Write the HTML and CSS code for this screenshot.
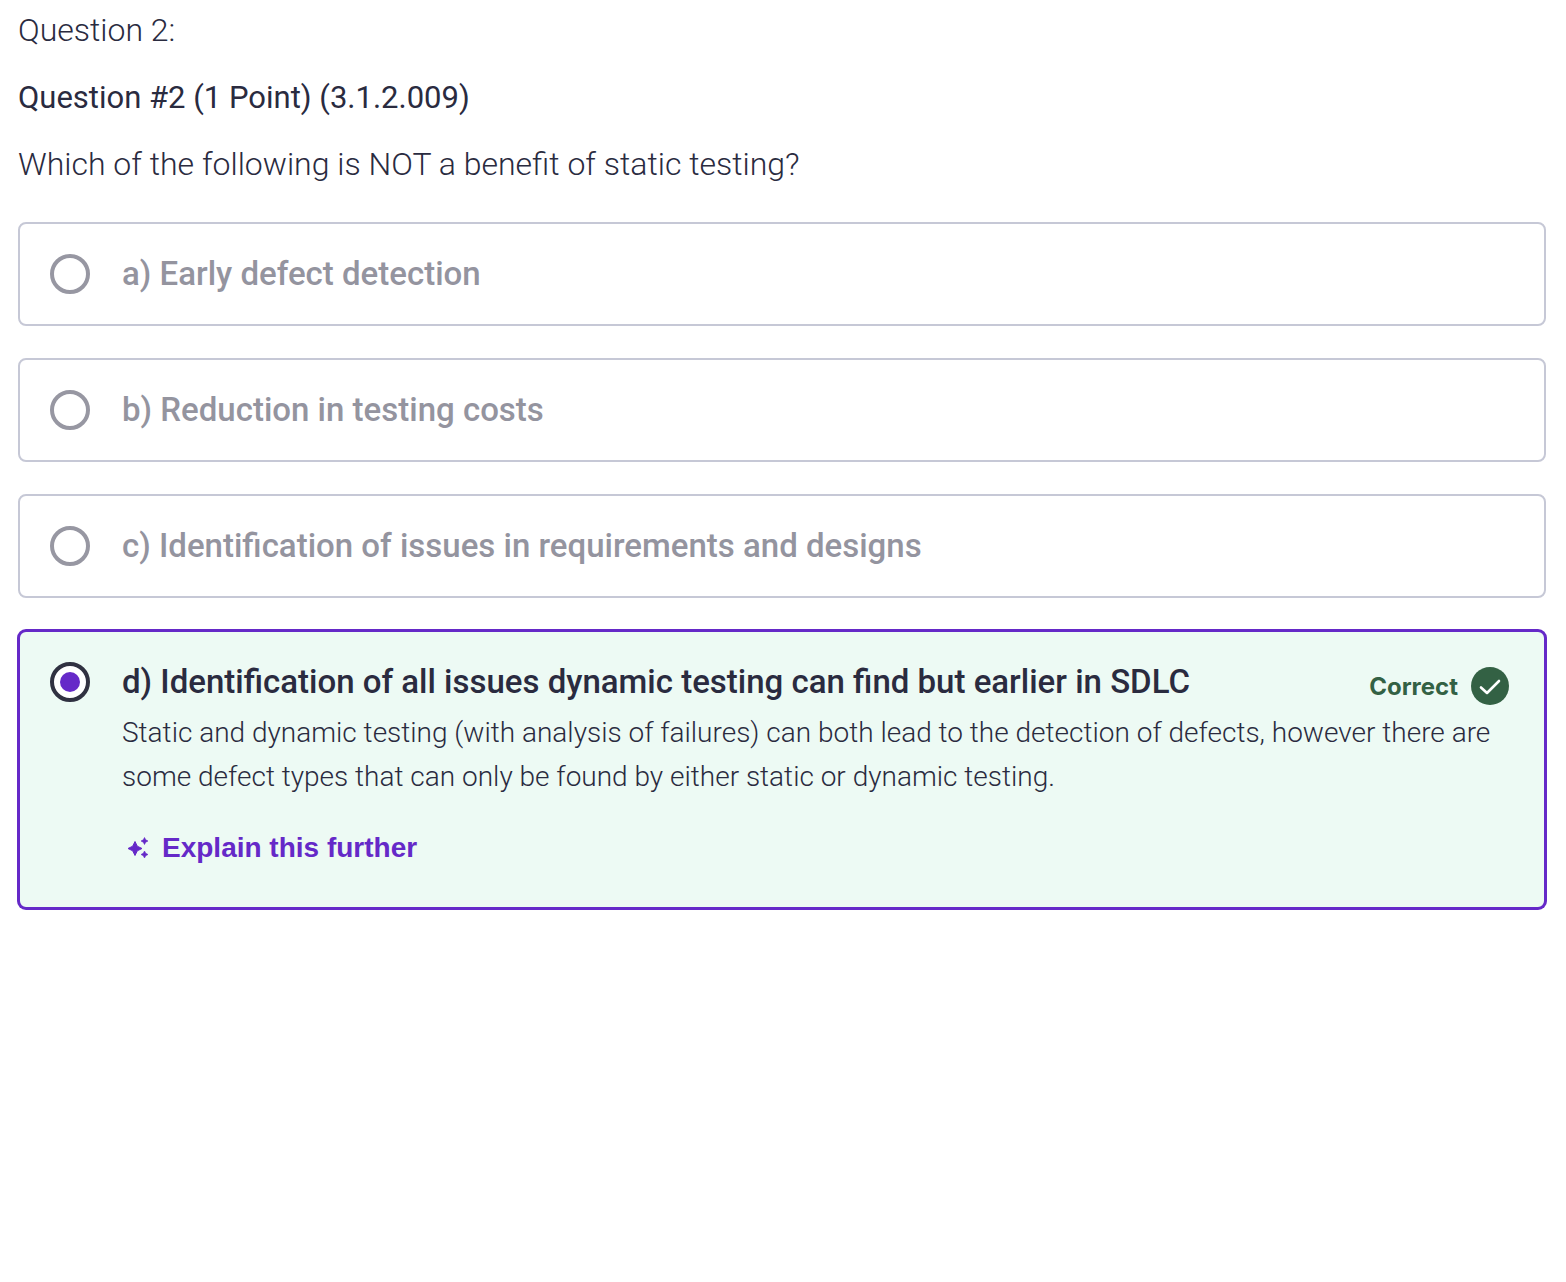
FILE: index.html
```html
<!DOCTYPE html>
<html lang="en">
<head>
<meta charset="utf-8">
<meta name="viewport" content="width=device-width, initial-scale=1">
<title>Question 2</title>
<link rel="stylesheet" href="styles.css">
</head>
<body>
<main class="question">
  <header class="prompt">
    <p class="prompt-label">Question 2:</p>
    <h1 class="prompt-title">Question #2 (1 Point) (3.1.2.009)</h1>
    <p class="prompt-text">Which of the following is NOT a benefit of static testing?</p>
  </header>
  <form class="answers">
    <div class="answer">
      <input class="answer-radio" type="radio" name="answer" id="answer-a" disabled>
      <label class="answer-label" for="answer-a">a) Early defect detection</label>
    </div>
    <div class="answer">
      <input class="answer-radio" type="radio" name="answer" id="answer-b" disabled>
      <label class="answer-label" for="answer-b">b) Reduction in testing costs</label>
    </div>
    <div class="answer">
      <input class="answer-radio" type="radio" name="answer" id="answer-c" disabled>
      <label class="answer-label" for="answer-c">c) Identification of issues in requirements and designs</label>
    </div>
    <div class="answer answer-correct">
      <input class="answer-radio" type="radio" name="answer" id="answer-d" checked>
      <div class="answer-body">
        <div class="answer-head">
          <label class="answer-label" for="answer-d">d) Identification of all issues dynamic testing can find but earlier in SDLC</label>
          <span class="verdict">Correct
            <svg class="verdict-icon" viewBox="0 0 38 38" aria-hidden="true"><circle cx="19" cy="19" r="19" fill="#336144"/><path d="M10 20.500l6 5.500 12-12" fill="none" stroke="#fff" stroke-width="2.600" stroke-linecap="round" stroke-linejoin="round"/></svg>
          </span>
        </div>
        <p class="answer-note">Static and dynamic testing (with analysis of failures) can both lead to the detection of defects, however there are some defect types that can only be found by either static or dynamic testing.</p>
        <button class="explain" type="button">
          <svg class="explain-icon" viewBox="0 0 24 24" aria-hidden="true"><path d="M9 5.500l2.300 4.700L16 12.500l-4.700 2.300L9 19.500l-2.300-4.700L2 12.500l4.700-2.300z" fill="currentColor" stroke="currentColor" stroke-linejoin="round"/><path d="M18.500 1.500l1.200 2.300L22 5l-2.300 1.200-1.200 2.300-1.200-2.300L15 5l2.300-1.200zM18.500 15l1.200 2.300 2.300 1.200-2.300 1.200-1.200 2.300-1.200-2.300-2.300-1.200 2.300-1.200z" fill="currentColor" stroke="currentColor" stroke-width="0.600" stroke-linejoin="round"/></svg>
          Explain this further
        </button>
      </div>
    </div>
  </form>
</main>
</body>
</html>
```

FILE: styles.css
```css
* { box-sizing: border-box; }
body {
  margin: 0;
  background: #fff;
  color: #2a2b3f;
  font-family: Roboto, "Liberation Sans", sans-serif;
}
.question { padding: 8px 20px 32px 18px; }
.prompt { display: grid; gap: 22px; margin-bottom: 35px; }
.prompt-label, .prompt-title, .prompt-text {
  margin: 0;
  font-size: 32px;
  line-height: 45px;
  font-weight: 300;
}
.prompt-title { font-size: 31px; font-weight: 400; }
.answers { display: grid; gap: 32px; }
.answer {
  display: flex;
  align-items: flex-start;
  gap: 32px;
  padding: 30px;
  border: 2px solid #c6c8d6;
  border-radius: 8px;
}
.answer-radio {
  appearance: none;
  display: grid;
  place-items: center;
  flex: none;
  width: 40px;
  height: 40px;
  margin: 0;
  border: 4px solid #9797a2;
  border-radius: 50%;
  background: #fff;
}
.answer-radio:checked { border-color: #303141; }
.answer-radio:checked::before {
  content: "";
  width: 20px;
  height: 20px;
  border-radius: 50%;
  background: #6529c8;
}
.answer-label {
  color: #94949f;
  font-size: 33px;
  line-height: 40px;
  font-weight: 500;
}
.answer-correct {
  border-color: #6529c8;
  background: #edfaf4;
  box-shadow: 0 0 0 1px #6529c8;
}
.answer-correct .answer-label { color: #2a2b3f; }
.answer-body { flex: 1; min-width: 0; }
.answer-head { display: flex; justify-content: space-between; align-items: flex-start; gap: 16px; }
.verdict {
  display: flex;
  align-items: center;
  gap: 13px;
  padding: 5px 5px 0 0;
  color: #336144;
  font-family: Inter, "Liberation Sans", sans-serif;
  font-size: 24px;
  font-weight: 700;
}
.verdict-icon { width: 38px; height: 38px; }
.answer-note { margin: 6px 0 0; font-size: 28px; line-height: 44px; font-weight: 300; }
.explain {
  display: flex;
  align-items: center;
  gap: 12px;
  padding: 0 4px;
  margin: 33px 0 13px;
  border: 0;
  background: none;
  color: #6529c8;
  font: 700 28px/32px "Liberation Sans", sans-serif;
}
.explain-icon { width: 24px; height: 24px; }
```
